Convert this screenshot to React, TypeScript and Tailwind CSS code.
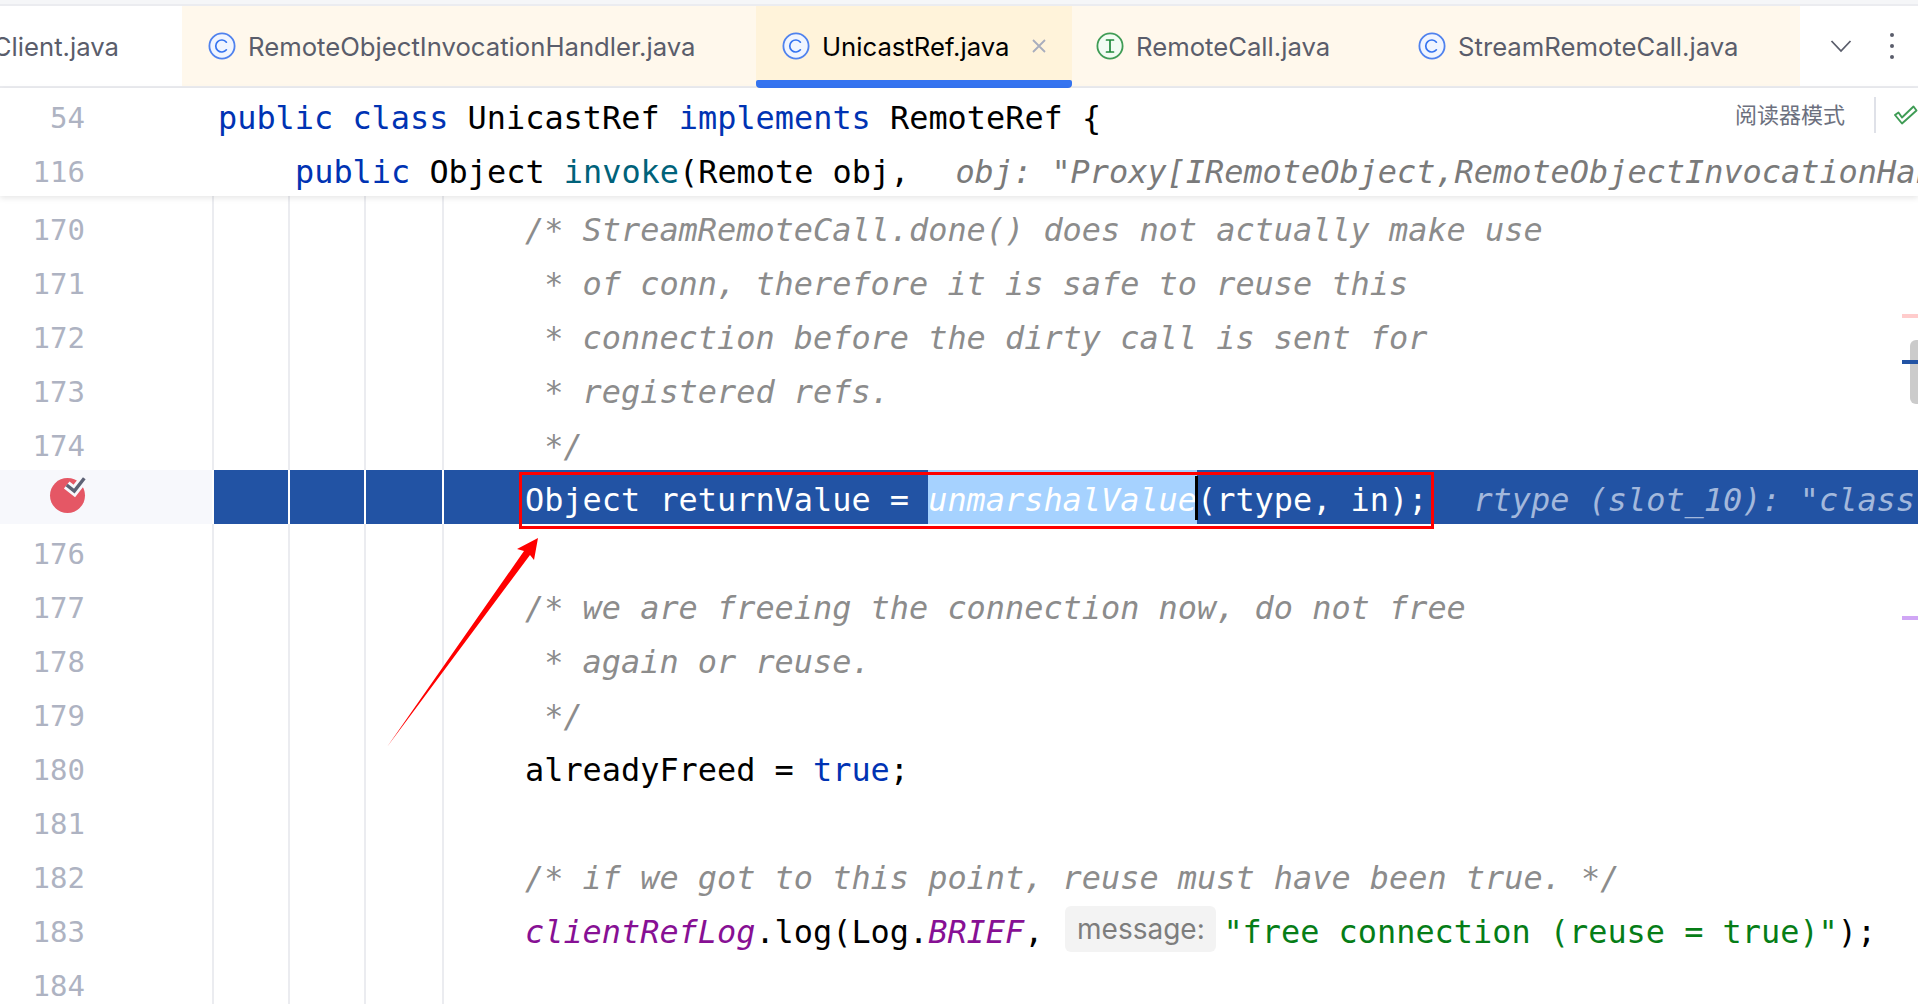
import React from 'react';

const mono = "font-['DejaVu_Sans_Mono',monospace]";
const ui = "font-['Inter','Noto_Sans_CJK_SC',sans-serif]";

const ClassIcon = () => (
  <svg width="28" height="28" viewBox="0 0 28 28" fill="none" className="shrink-0">
    <circle cx="14" cy="14" r="12.6" fill="#f0f5ff" stroke="#4f82ee" strokeWidth="1.8" />
    <path d="M18.4 10.2a6 6 0 1 0 0 7.6" stroke="#3574f0" strokeWidth="1.7" strokeLinecap="round" />
  </svg>
);

const InterfaceIcon = () => (
  <svg width="28" height="28" viewBox="0 0 28 28" fill="none" className="shrink-0">
    <circle cx="14" cy="14" r="12.6" fill="#f2fcf3" stroke="#3f9c55" strokeWidth="1.8" />
    <path d="M10.5 8h7M10.5 20h7M14 8v12" stroke="#208a3c" strokeWidth="1.7" strokeLinecap="round" />
  </svg>
);

const Tab = ({ name, icon, width }: { name: string; icon: React.ReactNode; width: string }) => (
  <div className={`${width} flex h-full items-center gap-3 bg-[#fff8ec] text-[#5a5d6b]`}>
    {icon}
    <span className="mt-[2px] whitespace-nowrap">{name}</span>
  </div>
);

const Gutter = ({ n, active }: { n?: number; active?: boolean }) => (
  <div className={`relative flex h-full w-[212px] shrink-0 items-start justify-end pr-[127px] text-[29px] leading-[60px] text-[#aeb3c2] ${active ? 'bg-[#f7f8fc]' : ''}`}>
    {active ? <Breakpoint /> : n}
  </div>
);

const Breakpoint = () => (
  <svg width="42" height="42" viewBox="0 0 42 42" className="absolute left-[47px] top-[3px]">
    <circle cx="20.5" cy="22.5" r="17.5" fill="#e55765" />
    <path d="M19.7 12l7.6 6 10-12.7" fill="none" stroke="#f7f8fc" strokeWidth="9" />
    <path d="M19.7 12l7.6 6 10-12.7" fill="none" stroke="#5d6275" strokeWidth="3.4" />
  </svg>
);

const Guide = ({ w, active }: { w: string; active?: boolean }) => (
  <div className={`${w} h-full shrink-0 border-l-2 ${active ? 'border-white' : 'border-[#ebecf0]'}`} />
);

// one editor line below the sticky header, with its indent guides
const Line = ({ n, children, active }: { n: number; children?: React.ReactNode; active?: boolean }) => (
  <div className="flex h-[54px] shrink-0 items-center overflow-hidden">
    <Gutter n={n} active={active} />
    <div className={`flex h-full flex-1 items-center overflow-hidden ${active ? 'bg-[#2253a4]' : ''}`}>
      <Guide w="w-[76px]" active={active} />
      <Guide w="w-[76px]" active={active} />
      <Guide w="w-[78px]" active={active} />
      <div className={`flex h-full flex-1 items-start whitespace-pre border-l-2 pl-[81px] leading-[60px] ${active ? 'border-white' : 'border-[#ebecf0]'}`}>
        {children}
      </div>
    </div>
  </div>
);

const Comment = ({ children }: { children: React.ReactNode }) => <span className="italic text-[#8c8c8c]">{children}</span>;

export default function App() {
  return (
    <div className={`relative h-[1004px] w-[1918px] overflow-hidden bg-white ${mono} text-[31.9px] text-black`}>
      {/* tab bar */}
      <div className="h-1 bg-[#f5f6f8]" />
      <div className="h-0.5 bg-[#ebecf0]" />
      <div className={`flex h-[82px] items-start border-b-2 border-[#ebecf0] ${ui} text-[25.7px]`}>
        <div className="flex h-[80px] w-[182px] shrink-0 items-center justify-end overflow-hidden pr-[63px] text-[#5a5d6b]">
          <span className="mt-[2px] whitespace-nowrap">Client.java</span>
        </div>
        <Tab name="RemoteObjectInvocationHandler.java" icon={<ClassIcon />} width="h-[80px] w-[574px] pl-[26px]" />
        <div className="relative flex h-[82px] w-[316px] shrink-0 items-start bg-[#fff3da]">
          <div className="flex h-[80px] w-full items-center gap-3 pl-[26px]">
            <ClassIcon />
            <span className="mt-[2px]">UnicastRef.java</span>
          </div>
          <svg width="16" height="16" viewBox="0 0 16 16" className="absolute left-[275px] top-[32px]">
            <path d="M2 2l12 12M14 2L2 14" stroke="#a8adbd" strokeWidth="1.8" />
          </svg>
          <div className="absolute bottom-0 left-0 h-2 w-full rounded-b-[4px] rounded-t-[2px] bg-[#3574f0]" />
        </div>
        <Tab name="RemoteCall.java" icon={<InterfaceIcon />} width="h-[80px] w-[320px] pl-[24px]" />
        <Tab name="StreamRemoteCall.java" icon={<ClassIcon />} width="h-[80px] w-[408px] pl-[26px]" />
        <div className="flex h-[80px] flex-1 items-center pl-[30px]">
          <svg width="22" height="14" viewBox="0 0 22 14" fill="none">
            <path d="M1.5 2L11 12l9.5-10" stroke="#5a5d6b" strokeWidth="1.8" />
          </svg>
          <div className="ml-[38px] flex flex-col gap-[7px]">
            <div className="h-1 w-1 rounded-full bg-[#5a5d6b]" />
            <div className="h-1 w-1 rounded-full bg-[#5a5d6b]" />
            <div className="h-1 w-1 rounded-full bg-[#5a5d6b]" />
          </div>
        </div>
      </div>

      {/* sticky lines */}
      <div className="relative z-10 h-[108px] bg-white shadow-[0_2px_6px_rgba(0,0,0,0.1)]">
        <div className="flex h-[54px] items-start leading-[60px]">
          <div className="flex w-[212px] shrink-0 justify-end pr-[127px] text-[29px] text-[#aeb3c2]">54</div>
          <div className="flex h-[54px] flex-1 items-start whitespace-pre pl-[6px]">
            <span className="text-[#0033b3]">public class </span>
            UnicastRef <span className="text-[#0033b3]">implements </span>RemoteRef {'{'}
            <span className={`${ui} ml-auto self-center text-[22px] leading-[54px] text-[#6c707e]`}>阅读器模式</span>
            <div className="ml-[29px] h-9 w-0.5 self-center bg-[#dfe1e8]" />
            <svg width="24" height="20" viewBox="0 0 24 20" fill="none" className="ml-[18px] shrink-0 self-center">
              <path d="M1 10l7 8.5L22.5 5.5 19.5 1.5 8 12.5 4.5 7.5z" stroke="#3f9c55" strokeWidth="1.9" strokeLinejoin="round" />
            </svg>
          </div>
        </div>
        <div className="flex h-[54px] items-start overflow-hidden leading-[60px]">
          <div className="flex w-[212px] shrink-0 justify-end pr-[127px] text-[29px] text-[#aeb3c2]">116</div>
          <div className="flex-1 overflow-hidden whitespace-pre pl-[83px]">
            <span className="text-[#0033b3]">public </span>Object <span className="text-[#00627a]">invoke</span>(Remote obj,
            <span className="ml-[46px] italic text-[#7a7a7a]">obj: "Proxy[IRemoteObject,RemoteObjectInvocationHandler]"</span>
          </div>
        </div>
      </div>

      {/* editor */}
      <div className="flex h-1 shrink-0">
        <div className="w-[212px] shrink-0" />
        <Guide w="w-[76px]" />
        <Guide w="w-[76px]" />
        <Guide w="w-[78px]" />
        <Guide w="w-[76px]" />
      </div>
      <Line n={170}><Comment>/* StreamRemoteCall.done() does not actually make use</Comment></Line>
      <Line n={171}><Comment> * of conn, therefore it is safe to reuse this</Comment></Line>
      <Line n={172}><Comment> * connection before the dirty call is sent for</Comment></Line>
      <Line n={173}><Comment> * registered refs.</Comment></Line>
      <Line n={174}><Comment> */</Comment></Line>
      <Line n={175} active>
        <span className="text-white">Object returnValue = </span>
        <span className="h-full bg-[#a6d2ff] italic text-white">unmarshalValue</span>
        <span className="relative text-white">
          <span className="absolute left-[-2px] top-[6px] h-[44px] w-[3px] bg-black" />
          (rtype, in);
        </span>
        <span className="ml-[46px] italic text-[#a3b8dc]">rtype (slot_10): "class java.lang.Object"</span>
      </Line>
      <Line n={176} />
      <Line n={177}><Comment>/* we are freeing the connection now, do not free</Comment></Line>
      <Line n={178}><Comment> * again or reuse.</Comment></Line>
      <Line n={179}><Comment> */</Comment></Line>
      <Line n={180}>alreadyFreed = <span className="text-[#0033b3]">true</span>;</Line>
      <Line n={181} />
      <Line n={182}><Comment>/* if we got to this point, reuse must have been true. */</Comment></Line>
      <Line n={183}>
        <span className="italic text-[#871094]">clientRefLog</span>.log(Log.<span className="italic text-[#871094]">BRIEF</span>,
        <span className={`${ui} ml-[22px] mr-[7px] mt-1 flex h-[46px] w-[151px] items-center justify-center rounded-[6px] bg-[#f3f3f3] text-[28px] text-[#7d7d7d]`}>message:</span>
        <span className="text-[#067d17]">"free connection (reuse = true)"</span>);
      </Line>
      <Line n={184} />

      {/* scrollbar and error stripes */}
      <div className="absolute right-0 top-[314px] h-1 w-4 bg-[#ffcccc]" />
      <div className="absolute right-0 top-[340px] h-16 w-2 rounded-l-[6px] bg-[#cbcbcb]" />
      <div className="absolute right-0 top-[360px] h-1 w-4 bg-[#2253a4]" />
      <div className="absolute right-0 top-[616px] h-1 w-4 bg-[#d0a6f5]" />

      {/* annotation drawn on the screenshot */}
      <div className="absolute left-[519px] top-[472px] h-[57px] w-[915px] border-[3px] border-[#ff0000]" />
      <svg width="1918" height="1004" className="pointer-events-none absolute left-0 top-0">
        <polygon points="387,747 524,551 517,549 538,538 534,560 530,555" fill="#ff0000" />
      </svg>
    </div>
  );
}
